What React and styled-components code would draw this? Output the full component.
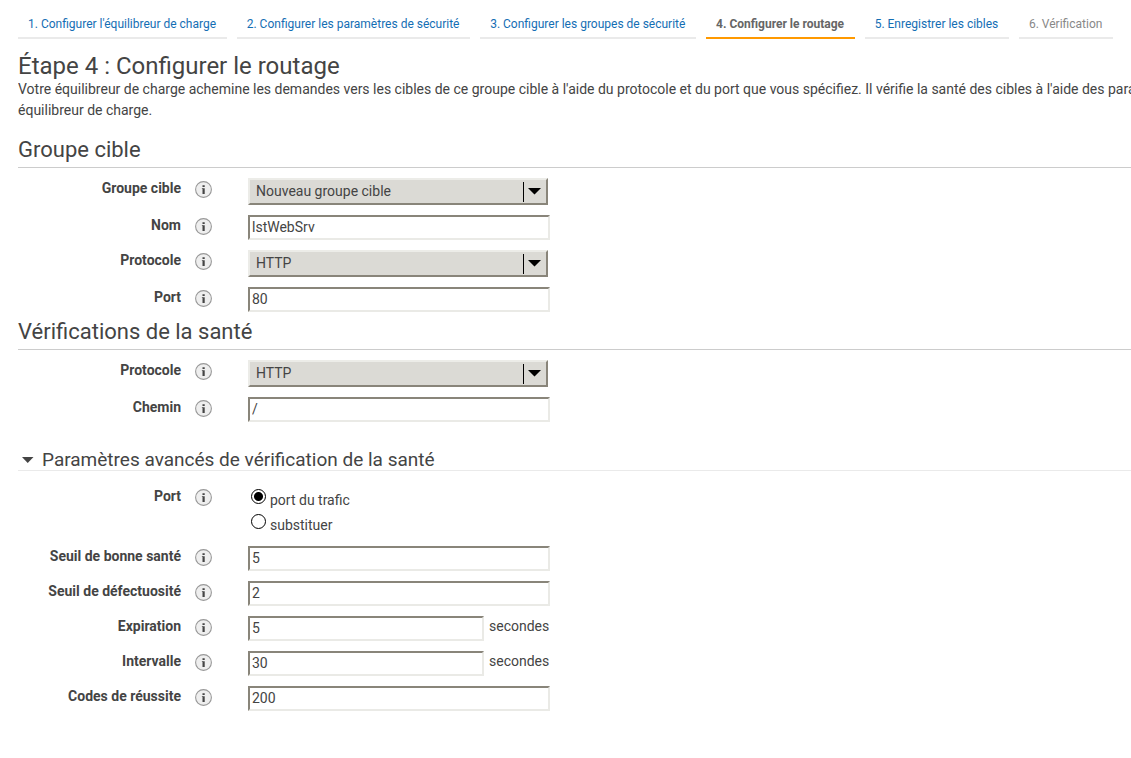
import React, { useState } from "react";
import styled, { createGlobalStyle } from "styled-components";

const GlobalStyle = createGlobalStyle`
  *, *::before, *::after { box-sizing: border-box; }
  body {
    margin: 0;
    background: #fff;
    color: #444;
    font-family: Roboto, "Liberation Sans", sans-serif;
    font-size: 14px;
    line-height: 20px;
    overflow-x: hidden;
  }
`;

const Page = styled.div`
  padding: 10px 0 32px 18px;
`;

const Steps = styled.nav`
  display: flex;
  gap: 10px;
  margin-right: 18px;
  font-size: 12px;
  white-space: nowrap;
`;

const Step = styled.a`
  flex: 1 0 auto;
  padding: 4px 10px 3px;
  border-bottom: 2px solid ${(p) => (p.$active ? "#ff9900" : "#eaeaea")};
  color: ${(p) => (p.$active ? "#666" : p.$pending ? "#888" : "#146eb4")};
  font-weight: ${(p) => (p.$active ? 700 : 400)};
  text-decoration: none;
`;

const Title = styled.h1`
  margin: 14px 0 0;
  font-size: 24px;
  line-height: 26px;
  font-weight: 400;
`;

const Intro = styled.p`
  margin: 0 0 16px;
  line-height: 21px;
  white-space: nowrap;
  overflow: hidden;
`;

const SectionTitle = styled.h2`
  margin: 7px 0 10px;
  padding-bottom: 4px;
  border-bottom: 1px solid #ccc;
  font-size: 22px;
  line-height: 26px;
  font-weight: 400;
`;

const AdvancedTitle = styled.h3`
  margin: 28px 0 15px;
  border-bottom: 1px solid #eaeaea;
  font-weight: 400;
`;

const Toggle = styled.button`
  display: flex;
  align-items: center;
  gap: 8px;
  padding: 0 0 0 4px;
  border: 0;
  background: none;
  color: inherit;
  font: inherit;
  font-size: 19px;
  line-height: 20px;
`;

const Fields = styled.div`
  display: grid;
  gap: 10px;
`;

const Row = styled.div`
  display: grid;
  grid-template-columns: 163px 18px minmax(0, 1fr);
  column-gap: 14px;
  align-items: start;
`;

const Name = styled.label`
  font-weight: 700;
  text-align: right;
`;

const InfoButton = styled.button`
  display: block;
  margin-top: 3px;
  padding: 0;
  border: 0;
  background: none;
  line-height: 0;
`;

const Control = styled.div`
  display: flex;
  gap: 5px;
  padding-left: 21px;
`;

const TextInput = styled.input`
  width: ${(p) => (p.$short ? "236px" : "302px")};
  height: 25px;
  padding: 0 2px 2px;
  border: 2px solid;
  border-color: #89857a #eaeae6 #eaeae6 #89857a;
  background: #fff;
  color: #444;
  font: inherit;
  outline: 0;
`;

const SelectBox = styled.div`
  position: relative;
  width: 300px;
`;

const Select = styled.select`
  display: block;
  width: 100%;
  height: 27px;
  padding: 0 28px 2px 6px;
  border: 2px solid;
  border-color: #ecece8 #89857a #89857a #ecece8;
  border-radius: 0;
  appearance: none;
  background: #dbdad5;
  color: #444;
  font: inherit;
`;

const SelectArrow = styled.svg`
  position: absolute;
  top: 4px;
  right: 6px;
  pointer-events: none;
`;

const Choices = styled.div`
  display: grid;
`;

const Choice = styled.label`
  display: flex;
  align-items: flex-start;
  gap: 4px;
  height: 25px;
  padding: 4px 0 0 3px;
`;

const Radio = styled.input`
  appearance: none;
  width: 15px;
  height: 15px;
  margin: -1px 0 0;
  border: 1px solid #000;
  border-radius: 50%;
  background: #fff;
  &:checked {
    background: radial-gradient(circle, #000 4px, #fff 5px);
  }
`;

const steps = [
  { text: "1. Configurer l'équilibreur de charge" },
  { text: "2. Configurer les paramètres de sécurité" },
  { text: "3. Configurer les groupes de sécurité" },
  { text: "4. Configurer le routage", active: true },
  { text: "5. Enregistrer les cibles" },
  { text: "6. Vérification", pending: true },
];

function InfoIcon() {
  return (
    <svg width="18" height="18" viewBox="0 0 18 18" aria-hidden="true">
      <circle cx="8.5" cy="8.5" r="7.9" fill="#eee" stroke="#999" strokeWidth="1.1" />
      <path d="M7.5 4.2h2.2v1.9H7.5zM6.9 7.2h2.8V13H7.5V8.1h-.6z" fill="#444" />
    </svg>
  );
}

function Field({ id, label, children }) {
  return (
    <Row>
      <Name id={`${id}-label`} htmlFor={id}>{label}</Name>
      <InfoButton type="button" aria-labelledby={`${id}-label`}>
        <InfoIcon />
      </InfoButton>
      <Control>{children}</Control>
    </Row>
  );
}

function TextField({ id, label, value, unit }) {
  return (
    <Field id={id} label={label}>
      <TextInput id={id} type="text" defaultValue={value} $short={Boolean(unit)} />
      {unit && <span>{unit}</span>}
    </Field>
  );
}

function SelectField({ id, label, value }) {
  return (
    <Field id={id} label={label}>
      <SelectBox>
        <Select id={id} defaultValue={value}>
          <option>{value}</option>
        </Select>
        <SelectArrow width="19" height="20" viewBox="0 0 19 20" aria-hidden="true">
          <path d="M0 0h1v20H0zM5 6h13l-6.5 6.5z" fill="#000" />
        </SelectArrow>
      </SelectBox>
    </Field>
  );
}

export default function App() {
  const [open, setOpen] = useState(true);
  return (
    <Page>
      <GlobalStyle />
      <Steps>
        {steps.map((s) => (
          <Step
            key={s.text}
            href="#"
            $active={s.active}
            $pending={s.pending}
            aria-current={s.active ? "step" : undefined}
          >
            {s.text}
          </Step>
        ))}
      </Steps>
      <main>
        <Title>Étape 4 : Configurer le routage</Title>
        <Intro>
          Votre équilibreur de charge achemine les demandes vers les cibles de ce groupe cible à l'aide du protocole et du port que vous spécifiez. Il vérifie la santé des cibles à l'aide des paramètres
          <br />
          équilibreur de charge.
        </Intro>

        <SectionTitle>Groupe cible</SectionTitle>
        <Fields>
          <SelectField id="group" label="Groupe cible" value="Nouveau groupe cible" />
          <TextField id="name" label="Nom" value="lstWebSrv" />
          <SelectField id="protocol" label="Protocole" value="HTTP" />
          <TextField id="port" label="Port" value="80" />
        </Fields>

        <SectionTitle>Vérifications de la santé</SectionTitle>
        <Fields>
          <SelectField id="health-protocol" label="Protocole" value="HTTP" />
          <TextField id="path" label="Chemin" value="/" />
        </Fields>

        <AdvancedTitle>
          <Toggle type="button" aria-expanded={open} onClick={() => setOpen(!open)}>
            <svg width="12" height="6" viewBox="0 0 12 6" aria-hidden="true">
              <path d="M0 0h11.5L5.7 6z" fill="#444" />
            </svg>
            Paramètres avancés de vérification de la santé
          </Toggle>
        </AdvancedTitle>
        {open && (
          <Fields>
            <Field id="traffic" label="Port">
              <Choices role="radiogroup" aria-labelledby="traffic-label">
                <Choice>
                  <Radio id="traffic" type="radio" name="health-port" defaultChecked />
                  <span>port du trafic</span>
                </Choice>
                <Choice>
                  <Radio type="radio" name="health-port" />
                  <span>substituer</span>
                </Choice>
              </Choices>
            </Field>
            <TextField id="healthy" label="Seuil de bonne santé" value="5" />
            <TextField id="unhealthy" label="Seuil de défectuosité" value="2" />
            <TextField id="timeout" label="Expiration" value="5" unit="secondes" />
            <TextField id="interval" label="Intervalle" value="30" unit="secondes" />
            <TextField id="codes" label="Codes de réussite" value="200" />
          </Fields>
        )}
      </main>
    </Page>
  );
}
